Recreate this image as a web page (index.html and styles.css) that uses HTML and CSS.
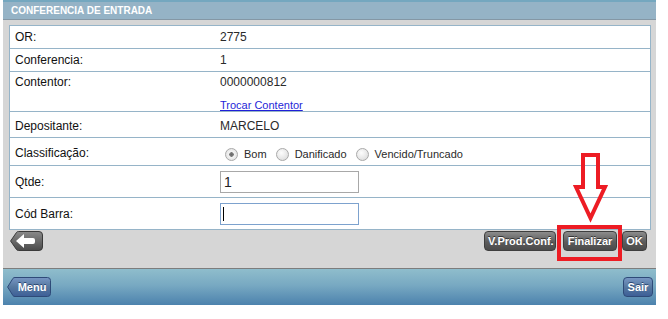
FILE: index.html
```html
<!DOCTYPE html>
<html>

<head>
    <meta charset="utf-8">
    <title>Conferencia de entrada</title>
    <link rel="stylesheet" href="styles.css">
</head>

<body>
    <div class="page">
        <div class="panel">
            <div class="panel_title">CONFERENCIA DE ENTRADA</div>

            <div class="form_table">
                <div class="row row_short">
                    <div class="label_text">OR:</div>
                    <div class="value_text">2775</div>
                </div>
                <div class="row row_short">
                    <div class="label_text">Conferencia:</div>
                    <div class="value_text">1</div>
                </div>
                <div class="row row_contentor">
                    <div class="label_text">Contentor:</div>
                    <div class="value_text">
                        <div>0000000812</div>
                        <a class="link_text" href="#">Trocar Contentor</a>
                    </div>
                </div>
                <div class="row row_depositante">
                    <div class="label_text">Depositante:</div>
                    <div class="value_text">MARCELO</div>
                </div>
                <div class="row row_classif">
                    <div class="label_text">Classificação:</div>
                    <div class="value_text radios">
                        <label><input type="radio" name="fclass" checked> Bom</label>
                        <label><input type="radio" name="fclass"> Danificado</label>
                        <label><input type="radio" name="fclass"> Vencido/Truncado</label>
                    </div>
                </div>
                <div class="row row_input">
                    <div class="label_text">Qtde:</div>
                    <div class="value_text">
                        <input class="text_input" type="text" id="fqtde" value="1">
                    </div>
                </div>
                <div class="row row_input row_last">
                    <div class="label_text">Cód Barra:</div>
                    <div class="value_text">
                        <span class="input_wrap">
                            <input class="text_input text_input_focus" type="text" id="fbarra">
                            <span class="caret"></span>
                        </span>
                    </div>
                </div>
            </div>

            <div class="actions">
                <button class="btn_back" title="Voltar">
                    <svg width="33" height="20" viewBox="0 0 33 20">
                        <defs>
                            <linearGradient id="gback" x1="0" y1="0" x2="0" y2="1">
                                <stop offset="0" stop-color="#8a8a8a"/>
                                <stop offset="1" stop-color="#4a4a4a"/>
                            </linearGradient>
                        </defs>
                        <path d="M0.6,10 L6.6,1.3 Q7.2,0.5 8.6,0.5 H29 Q32.5,0.5 32.5,4 V16 Q32.5,19.5 29,19.5 H8.6 Q7.2,19.5 6.6,18.7 Z" fill="url(#gback)" stroke="#3a3a3a"/>
                        <path d="M6,10 L14,3 V7 H23 Q25,7 25,9 V11 Q25,13 23,13 H14 V17 Z" fill="#fff"/>
                    </svg>
                </button>
                <div class="actions_right">
                    <button class="btn_gray btn_vprod">V.Prod.Conf.</button>
                    <button class="btn_gray btn_finalizar">Finalizar</button>
                    <button class="btn_gray btn_ok">OK</button>
                </div>
            </div>
        </div>

        <div class="footer">
            <button class="btn_menu">
                <svg class="btn_menu_shape" width="44" height="20" viewBox="0 0 44 20">
                    <defs>
                        <linearGradient id="gmenu" x1="0" y1="0" x2="0" y2="1">
                            <stop offset="0" stop-color="#7796c4"/>
                            <stop offset="0.5" stop-color="#56789f"/>
                            <stop offset="1" stop-color="#3d5f98"/>
                        </linearGradient>
                    </defs>
                    <path d="M0.6,10 L6,1.3 Q6.6,0.5 8,0.5 H40.5 Q43.5,0.5 43.5,3.5 V16.5 Q43.5,19.5 40.5,19.5 H8 Q6.6,19.5 6,18.7 Z" fill="url(#gmenu)" stroke="#2e4a78"/>
                </svg>
                <span class="btn_menu_text">Menu</span>
            </button>
            <button class="btn_sair">Sair</button>
        </div>

        <!-- marcacao em vermelho -->
        <div class="mark_box"></div>
        <svg class="mark_arrow" width="48" height="76" viewBox="0 0 48 76">
            <polygon points="16,5 31,5 31,37 38,37 23.5,68 9,37 16,37" fill="none" stroke="#ed1c24" stroke-width="4"/>
        </svg>
    </div>
</body>

</html>
```

FILE: styles.css
```css
        body {
            margin: 0;
            background: #fff;
            font-family: "Liberation Sans", Arial, sans-serif;
        }

        .page {
            position: relative;
            width: 653px;
            margin-left: 3px;
        }

        .panel {
            background: #d6d6d6;
            border-bottom: 1px solid #7d7d7d;
            padding-bottom: 17px;
        }

        .panel_title {
            height: 17px;
            line-height: 18px;
            border-top: 2px solid #74a7bf;
            border-bottom: 1px solid #8497a5;
            background: #95b3c6;
            color: #fff;
            font-size: 10px;
            font-weight: bold;
            padding-left: 8px;
        }

        .form_table {
            margin: 5px 5px 0 6px;
            background: #fff;
            border: 1px solid #96b4c8;
        }

        .row {
            display: grid;
            grid-template-columns: 210px 1fr;
            align-items: center;
            border-bottom: 1px solid #96b4c8;
            font-size: 12px;
        }

        .row_last {
            border-bottom: none;
        }

        .row_short { height: 22px; }
        .row_depositante { height: 26px; padding-top: 3px; box-sizing: border-box; }
        .row_classif { height: 28px; padding-top: 3px; box-sizing: border-box; }
        .row_input { height: 31px; }

        .row_contentor {
            height: 40px;
            align-items: start;
            padding-top: 3px;
            box-sizing: border-box;
            line-height: 14px;
        }

        .label_text {
            padding-left: 5px;
            color: #111;
        }

        .value_text {
            color: #2a2a2a;
        }

        .link_text {
            display: inline-block;
            margin-top: 9px;
            color: #1f1fd8;
            font-size: 11px;
        }

        .radios {
            font-size: 11px;
            display: flex;
            align-items: center;
            padding-top: 2px;
        }

        .radios label {
            display: flex;
            align-items: center;
            margin-right: 4px;
        }

        .radios input {
            appearance: none;
            -webkit-appearance: none;
            width: 13px;
            height: 13px;
            margin: 0 6px 0 5px;
            border: 1px solid #a9a9a9;
            border-radius: 50%;
            background: radial-gradient(circle at 40% 35%, #fdfdfd 0%, #e2e2e2 70%, #cfcfcf 100%);
        }

        .radios input:checked {
            background: radial-gradient(circle, #6a6a6a 0%, #7c7c7c 26%, #f4f4f4 32%, #dcdcdc 100%);
        }

        .text_input {
            box-sizing: border-box;
            width: 139px;
            height: 22px;
            margin: 0;
            border: 1px solid #a8a8a8;
            padding: 0 3px;
            font-family: "Liberation Sans", Arial, sans-serif;
            font-size: 14px;
            color: #222;
            outline: none;
        }

        .text_input_focus {
            border-color: #7da2ce;
        }

        .input_wrap {
            position: relative;
            display: inline-block;
            vertical-align: top;
        }

        .caret {
            position: absolute;
            left: 3px;
            top: 4px;
            width: 1px;
            height: 14px;
            background: #000;
        }

        .actions {
            display: flex;
            justify-content: space-between;
            align-items: center;
            margin: 1px 9px 0 7px;
            height: 20px;
        }

        .actions_right {
            display: flex;
        }

        button {
            margin: 0;
            padding: 0;
            cursor: pointer;
            font-family: "Liberation Sans", Arial, sans-serif;
        }

        .btn_back {
            width: 33px;
            height: 20px;
            border: none;
            background: none;
            display: block;
        }

        .btn_back svg {
            display: block;
        }

        .btn_gray {
            height: 20px;
            padding: 0 3px;
            border: 1px solid #3e3e3e;
            border-radius: 4px;
            background: linear-gradient(#8c8c8c, #5c5c5c 55%, #4b4b4b);
            color: #fff;
            font-size: 11px;
            font-weight: bold;
            text-shadow: 0 -1px 0 #333;
        }

        .btn_vprod { width: 72px; }
        .btn_finalizar { width: 54px; margin-left: 7px; }
        .btn_ok { width: 25px; margin-left: 5px; }

        .footer {
            height: 36px;
            background: linear-gradient(#8fbdcc, #78a9c2 45%, #4c82ad);
            display: flex;
            justify-content: space-between;
            align-items: flex-start;
            padding: 8px 3px 0 4px;
            box-sizing: border-box;
        }

        .btn_menu {
            position: relative;
            width: 44px;
            height: 20px;
            border: none;
            background: none;
        }

        .btn_menu_shape {
            position: absolute;
            left: 0;
            top: 0;
        }

        .btn_menu_text {
            position: relative;
            display: block;
            padding-left: 6px;
            color: #fff;
            font-size: 11px;
            font-weight: bold;
            text-shadow: 0 -1px 0 #2b4570;
        }

        .btn_sair {
            width: 30px;
            height: 20px;
            border: 1px solid #2e4a78;
            border-radius: 4px;
            background: linear-gradient(#7796c4, #56789f 50%, #3d5f98);
            color: #fff;
            font-size: 11px;
            font-weight: bold;
            text-shadow: 0 -1px 0 #2b4570;
        }

        .mark_box {
            position: absolute;
            left: 554px;
            top: 225px;
            width: 65px;
            height: 36px;
            box-sizing: border-box;
            border: 4px solid #ed1c24;
        }

        .mark_arrow {
            position: absolute;
            left: 564px;
            top: 150px;
        }
```
